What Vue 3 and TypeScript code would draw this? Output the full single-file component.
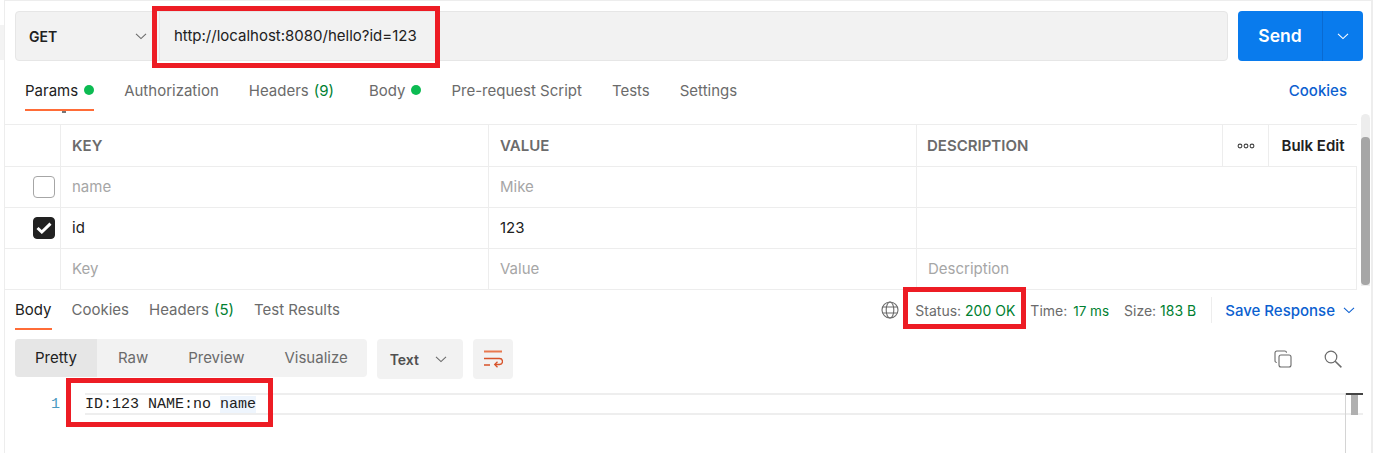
<script setup lang="ts">
const reqTabs = [
  { label: 'Params', active: true, dot: true },
  { label: 'Authorization' },
  { label: 'Headers', count: '(9)' },
  { label: 'Body', dot: true },
  { label: 'Pre-request Script' },
  { label: 'Tests' },
  { label: 'Settings' },
]
const resTabs = [
  { label: 'Body', active: true },
  { label: 'Cookies' },
  { label: 'Headers', count: '(5)' },
  { label: 'Test Results' },
]
const rows = [
  { key: 'name', value: 'Mike', desc: '', state: 'off', muted: true },
  { key: 'id', value: '123', desc: '', state: 'on', muted: false },
  { key: 'Key', value: 'Value', desc: 'Description', state: 'none', muted: true },
]
</script>

<template>
  <div class="page">
    <div class="side-mark"></div>
    <main class="panel">
      <section class="request">
        <div class="url-group">
          <div class="method">
            <span>GET</span>
            <svg width="12" height="12" viewBox="0 0 12 12"><path d="M1 3.8 6 8.6 11 3.8" fill="none" stroke="#6b6b6b" stroke-width="1.1" /></svg>
          </div>
          <div class="url">http://localhost:8080/hello?id=123</div>
        </div>
        <div class="send">
          <span class="send-label">Send</span>
          <span class="send-arrow">
            <svg width="12" height="12" viewBox="0 0 12 12"><path d="M1 3.8 6 8.6 11 3.8" fill="none" stroke="#fff" stroke-width="1.1" /></svg>
          </span>
        </div>
      </section>

      <nav class="req-tabs">
        <div v-for="t in reqTabs" :key="t.label" class="req-tab" :class="{ active: t.active, counted: t.count }">
          <span>{{ t.label }}</span>
          <span v-if="t.count" class="count">{{ t.count }}</span>
          <i v-if="t.dot" class="dot"></i>
        </div>
        <a class="cookies">Cookies</a>
      </nav>

      <section class="table-wrap">
        <div class="table">
          <div class="row head">
            <div class="c check"></div>
            <div class="c col">KEY</div>
            <div class="c col">VALUE</div>
            <div class="c desc">DESCRIPTION</div>
            <div class="c more">
              <svg width="18" height="6" viewBox="0 0 18 6"><g fill="none" stroke="#444" stroke-width="1.1"><circle cx="3" cy="3" r="1.9" /><circle cx="9" cy="3" r="1.9" /><circle cx="15" cy="3" r="1.9" /></g></svg>
            </div>
            <div class="c bulk">Bulk Edit</div>
          </div>
          <div v-for="r in rows" :key="r.key" class="row body-row" :class="{ muted: r.muted }">
            <div class="c check">
              <span v-if="r.state === 'off'" class="box"></span>
              <span v-else-if="r.state === 'on'" class="box on">
                <svg width="16" height="12" viewBox="0 0 16 12"><path d="M1.5 6 5.8 10 14.5 1.6" fill="none" stroke="#fff" stroke-width="3" /></svg>
              </span>
            </div>
            <div class="c col">{{ r.key }}</div>
            <div class="c col">{{ r.value }}</div>
            <div class="c fill">{{ r.desc }}</div>
          </div>
        </div>
        <div class="scroll"><div class="thumb"></div></div>
      </section>

      <section class="res-bar">
        <div class="res-tabs">
          <div v-for="t in resTabs" :key="t.label" class="res-tab" :class="{ active: t.active }">
            <span>{{ t.label }}</span>
            <span v-if="t.count" class="count">{{ t.count }}</span>
          </div>
        </div>
        <div class="meta">
          <svg class="globe" width="18" height="18" viewBox="0 0 18 18"><g fill="none" stroke="#6b6b6b" stroke-width="1.1"><circle cx="9" cy="9" r="8" /><ellipse cx="9" cy="9" rx="3.8" ry="8" /><path d="M1.7 6h14.6M1.7 12h14.6" /></g></svg>
          <span class="m status">Status: <b>200 OK</b></span>
          <span class="m time">Time: <b>17 ms</b></span>
          <span class="m size">Size: <b>183 B</b></span>
          <span class="sep"></span>
          <span class="save">Save Response</span>
          <svg width="12" height="12" viewBox="0 0 12 12"><path d="M1 3.8 6 8.6 11 3.8" fill="none" stroke="#0b5fd0" stroke-width="1.1" /></svg>
        </div>
      </section>

      <section class="toolbar">
        <div class="seg">
          <span class="seg-item active">Pretty</span>
          <span class="seg-item">Raw</span>
          <span class="seg-item">Preview</span>
          <span class="seg-item">Visualize</span>
        </div>
        <div class="format">
          <span>Text</span>
          <svg width="12" height="12" viewBox="0 0 12 12"><path d="M1 3.8 6 8.6 11 3.8" fill="none" stroke="#6b6b6b" stroke-width="1.1" /></svg>
        </div>
        <div class="wrap-btn">
          <svg width="20" height="18" viewBox="0 0 20 18"><g fill="none" stroke="#d8532a" stroke-width="1.3"><path d="M1 1.5h18" stroke-width="2" stroke="#e8784f" /><path d="M1 8.5h15.5a3 3 0 0 1 0 6H12M1 15h6" /><path d="M14.5 11.7 11.7 14.5 14.5 17.3" /></g></svg>
        </div>
        <div class="tools">
          <svg width="18" height="18" viewBox="0 0 18 18"><g fill="none" stroke="#6b6b6b" stroke-width="1.1"><rect x="5" y="5" width="12" height="12" rx="2" /><path d="M2.8 12.5A1.8 1.8 0 0 1 1 10.7V2.8A1.8 1.8 0 0 1 2.8 1h7.9a1.8 1.8 0 0 1 1.8 1.8" /></g></svg>
          <svg width="18" height="18" viewBox="0 0 18 18"><g fill="none" stroke="#6b6b6b" stroke-width="1.2"><circle cx="7" cy="7" r="5.8" /><path d="M11.2 11.2 17.4 17.4" stroke-width="1.5" /></g></svg>
        </div>
      </section>

      <section class="code">
        <span class="ln">1</span>
        <div class="line">
          <span class="txt">ID:123 NAME:no <span class="hl">name</span></span>
        </div>
        <div class="mini"><i></i></div>
      </section>
    </main>

    <div class="stray"></div>
    <div class="mark mark-url"></div>
    <div class="mark mark-status"></div>
    <div class="mark mark-body"></div>
  </div>
</template>

<style>
html, body { margin: 0; background: #fff; }
</style>

<style scoped>
.page {
  position: relative;
  width: 1386px;
  height: 453px;
  overflow: hidden;
  background: #fff;
  font-family: Inter, "Liberation Sans", sans-serif;
  font-size: 15px;
  color: #212121;
}
.side-mark {
  position: absolute;
  left: 0;
  top: 25px;
  width: 4px;
  height: 35px;
  background: #f3f3f3;
}
.stray {
  position: absolute;
  left: 62px;
  top: 111px;
  width: 4px;
  height: 2px;
  background: #777;
}
.panel {
  box-sizing: border-box;
  width: 1369px;
  height: 453px;
  margin-left: 4px;
  border-left: 1px solid #ededed;
  border-right: 2px solid #ededed;
  border-top: 1px solid #ededed;
  display: flex;
  flex-direction: column;
}
.request {
  display: flex;
  gap: 10px;
  height: 50px;
  margin: 10px 8px 0 10px;
}
.url-group {
  flex: 1;
  display: flex;
  background: #f2f2f2;
  border: 1px solid #e6e6e6;
  border-radius: 4px;
}
.method {
  box-sizing: border-box;
  width: 144px;
  padding: 0 12px 0 13px;
  display: flex;
  align-items: center;
  justify-content: space-between;
  font-weight: 600;
  font-size: 14px;
  border-right: 1px solid #e6e6e6;
}
.url {
  flex: 1;
  padding-left: 14px;
  line-height: 48px;
  font-size: 15px;
}
.send {
  width: 125px;
  display: flex;
  background: #097bed;
  color: #fff;
  border-radius: 4px;
  font-weight: 600;
  font-size: 17.5px;
}
.send-label {
  flex: 1;
  text-align: center;
  line-height: 50px;
  border-right: 1px solid #0a6ad0;
}
.send-arrow {
  width: 40px;
  display: flex;
  align-items: center;
  justify-content: center;
}
.req-tabs {
  display: flex;
  align-items: stretch;
  height: 50px;
  margin: 0 24px 0 20px;
  gap: 30px;
}
.req-tab {
  display: flex;
  align-items: center;
  gap: 5px;
  height: 50px;
  color: #6b6b6b;
  box-sizing: border-box;
  border-bottom: 2px solid transparent;
  padding-top: 11px;
  padding-bottom: 1px;
  line-height: 17px;
  white-space: nowrap;
}
.req-tab.counted { margin-right: 5px; }
.req-tab.active { color: #212121; border-bottom-color: #ff6c37; }
.count { color: #007f31; }
.dot {
  width: 10px;
  height: 10px;
  margin-left: 1px;
  border-radius: 50%;
  background: #0cbb52;
}
.cookies {
  margin-left: auto;
  align-self: center;
  padding-top: 8px;
  color: #0b5fd0;
  font-weight: 500;
}
.table-wrap {
  position: relative;
  margin-top: 13px;
  height: 166px;
}
.table {
  width: 1352px;
  border-top: 1px solid #ededed;
}
.row {
  display: flex;
  height: 41px;
  box-sizing: border-box;
  border-bottom: 1px solid #ededed;
}
.row.head { height: 42px; font-weight: 600; color: #6b6b6b; }
.c {
  box-sizing: border-box;
  display: flex;
  align-items: center;
  padding: 0 11px;
  border-right: 1px solid #ededed;
}
.body-row .col, .body-row .fill { padding-bottom: 2px; }
.check { width: 56px; justify-content: flex-start; padding: 0 0 0 28px; }
.col { width: 428px; }
.desc { width: 306px; padding-left: 10px; }
.fill { flex: 1; }
.muted .c { color: #a6a6a6; }
.more { width: 46px; justify-content: center; padding: 0; }
.bulk { flex: 1; color: #212121; justify-content: center; border-right: 0; padding: 0; }
.box {
  box-sizing: border-box;
  width: 22px;
  height: 22px;
  border: 1px solid #a6a6a6;
  border-radius: 4px;
  display: flex;
  align-items: center;
  justify-content: center;
}
.box.on { background: #212121; border-color: #212121; }
.scroll {
  position: absolute;
  right: 1px;
  top: -10px;
  width: 9px;
  height: 172px;
  background: #ededed;
  border-radius: 5px 5px 0 0;
}
.thumb {
  margin-top: 23px;
  height: 148px;
  border-radius: 4px;
  background: #a6a6a6;
}
.res-bar {
  display: flex;
  justify-content: space-between;
  height: 40px;
  margin: 0 16px 0 10px;
}
.res-tabs { display: flex; gap: 20px; }
.res-tab {
  box-sizing: border-box;
  height: 40px;
  display: flex;
  gap: 5px;
  align-items: center;
  color: #6b6b6b;
  border-bottom: 2px solid transparent;
}
.res-tab.active { color: #212121; border-bottom-color: #ff6c37; }
.meta { display: flex; align-items: center; font-size: 14px; }
.globe { margin-right: 16px; }
.m { color: #6b6b6b; white-space: nowrap; }
.m b { font-weight: 400; color: #007f31; }
.time { margin-left: 15px; }
.time b { font-size: 13.5px; margin-left: 2px; }
.size { margin-left: 15px; }
.sep { width: 1px; height: 26px; background: #ededed; margin: 0 13px 0 15px; }
.save { color: #0b5fd0; font-weight: 500; font-size: 15px; margin-right: 8px; }
.toolbar {
  display: flex;
  align-items: flex-start;
  height: 54px;
  margin: 9px 0 0 10px;
}
.seg {
  display: flex;
  height: 38px;
  background: #f2f2f2;
  border-radius: 4px;
  overflow: hidden;
}
.seg-item {
  color: #6b6b6b;
  line-height: 38px;
  padding: 0 20px;
  white-space: nowrap;
}
.seg-item.active { background: #e6e6e6; color: #212121; margin-right: 1px; }
.seg-item:last-child { padding-right: 19px; }
.format {
  display: flex;
  align-items: center;
  height: 40px;
  margin-left: 10px;
  padding: 0 16px 0 13px;
  box-sizing: border-box;
  width: 86px;
  justify-content: space-between;
  background: #f2f2f2;
  border-radius: 4px;
  font-weight: 600;
  font-size: 14px;
  color: #505050;
}
.wrap-btn {
  width: 40px;
  height: 40px;
  margin-left: 10px;
  background: #f2f2f2;
  border-radius: 4px;
  display: flex;
  align-items: center;
  justify-content: center;
}
.tools {
  margin-left: auto;
  display: flex;
  align-items: center;
  gap: 32px;
  height: 40px;
  margin-right: 29px;
}
.code {
  position: relative;
  display: flex;
  align-items: flex-start;
}
.ln {
  width: 55px;
  padding-top: 2px;
  text-align: right;
  font-family: "Liberation Mono", monospace;
  font-size: 15px;
  line-height: 20px;
  color: #4a9ac0;
}
.line {
  flex: 1;
  box-sizing: border-box;
  height: 22px;
  margin: 0 8px 0 25px;
  border-top: 2px solid #eeeeee;
  border-bottom: 2px solid #eeeeee;
  font-family: "Liberation Mono", monospace;
  font-size: 15px;
  line-height: 20px;
  color: #212121;
}
.hl { background: #eef5fd; }
.mini {
  position: absolute;
  right: 8px;
  top: 0;
  width: 17px;
  height: 60px;
  border-left: 1px solid #d4d4d4;
}
.mini i {
  display: block;
  width: 17px;
  height: 22px;
  border-top: 2px solid #444;
  box-sizing: border-box;
  position: relative;
}
.mini i::after {
  content: "";
  position: absolute;
  left: 5px;
  top: 0;
  width: 7px;
  height: 20px;
  background: #b0b0b0;
}
.mark {
  position: absolute;
  box-sizing: border-box;
  border: 5px solid #ed1c24;
}
.mark-url { left: 152px; top: 6px; width: 288px; height: 62px; }
.mark-status { left: 903px; top: 287px; width: 123px; height: 42px; }
.mark-body { left: 66px; top: 378px; width: 207px; height: 49px; }
</style>
